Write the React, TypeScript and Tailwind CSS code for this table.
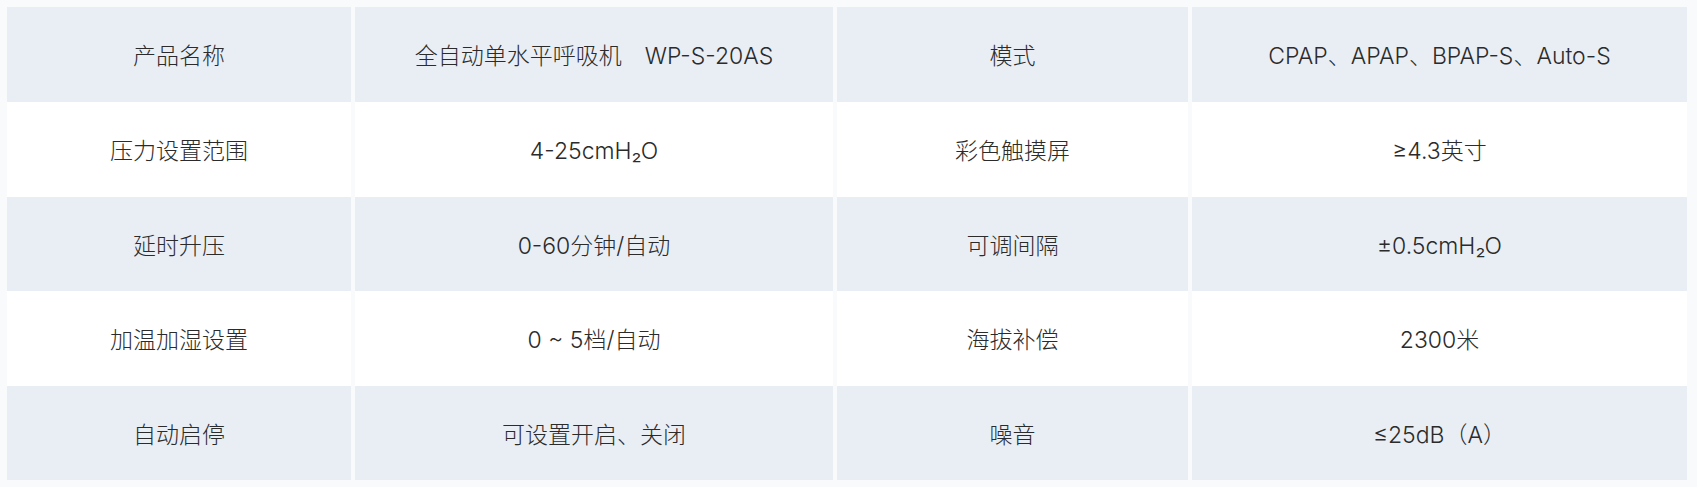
const rows: [string, string, string, string][] = [
  ["产品名称", "全自动单水平呼吸机\u3000WP-S-20AS", "模式", "CPAP、APAP、BPAP-S、Auto-S"],
  ["压力设置范围", "4-25cmH₂O", "彩色触摸屏", "≥4.3英寸"],
  ["延时升压", "0-60分钟/自动", "可调间隔", "±0.5cmH₂O"],
  ["加温加湿设置", "0 ~ 5档/自动", "海拔补偿", "2300米"],
  ["自动启停", "可设置开启、关闭", "噪音", "≤25dB（A）"],
];

export default function App() {
  return (
    <div className="w-[1697px] h-[487px] bg-[#f8fafc] pt-[7px] pl-[7px] font-['Inter','Noto_Sans_CJK_SC',sans-serif] font-light text-[23px] text-[#2b2b2b]">
      <div className="grid grid-cols-[344px_478px_351px_495px] grid-rows-[95px_95px_94px_95px_94px] gap-x-[4px] w-[1680px]">
        {rows.map((row, i) =>
          row.map((cell, j) => (
            <div
              key={`${i}-${j}`}
              className={`flex items-center justify-center whitespace-pre pt-[4px] ${i % 2 === 0 ? "bg-[#e9eef5]" : "bg-white"}`}
            >
              {cell}
            </div>
          ))
        )}
      </div>
    </div>
  );
}
